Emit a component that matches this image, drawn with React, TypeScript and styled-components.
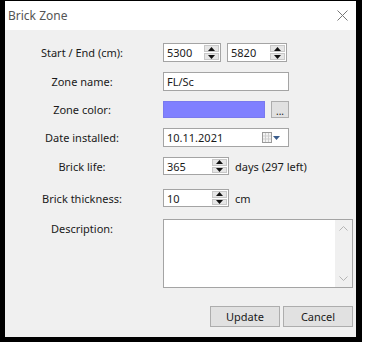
import styled, { createGlobalStyle } from 'styled-components';

const GlobalStyle = createGlobalStyle`
    html, body {
        margin: 0;
        padding: 0;
        background: #fff;
    }
    body {
        font-family: 'Noto Sans', 'Open Sans', sans-serif;
        font-size: 11px;
        color: #1a1a1a;
    }
`;

const Frame = styled.div`
    width: 351px;
    border-style: solid;
    border-color: #000;
    border-width: 1px 6px 5px 5px;
    background: #f0f0f0;
`;

const TitleBar = styled.div`
    height: 29px;
    background: #fff;
    display: flex;
    align-items: center;
    justify-content: space-between;
    padding: 0 8px 0 3px;
`;

const Title = styled.span`
    font-size: 12px;
    color: #555;
`;

const Body = styled.div`
    height: 307px;
    padding: 13px 3px 0 0;
    box-sizing: border-box;
    display: flex;
    flex-direction: column;
`;

const Row = styled.div<{ $top?: number; $align?: string }>`
    display: grid;
    grid-template-columns: 154px 1fr;
    column-gap: 4px;
    align-items: ${(p) => p.$align || 'center'};
    margin-top: ${(p) => p.$top || 0}px;
`;

const Label = styled.div<{ $pt?: number }>`
    text-align: center;
    padding-top: ${(p) => p.$pt || 0}px;
`;

const Field = styled.div`
    display: flex;
    align-items: center;
    gap: 6px;
`;

const TextBox = styled.div<{ $w: number; $h?: number }>`
    width: ${(p) => p.$w}px;
    height: ${(p) => p.$h || 19}px;
    box-sizing: border-box;
    border: 1px solid #a4a4a4;
    background: #fff;
    display: flex;
    align-items: center;
    padding-left: 3px;
    position: relative;
`;

const SpinWrap = styled.div<{ $w: number; $h?: number }>`
    width: ${(p) => p.$w}px;
    height: ${(p) => p.$h || 19}px;
    box-sizing: border-box;
    border: 1px solid #a4a4a4;
    background: #fff;
    display: flex;
    align-items: stretch;
`;

const SpinText = styled.div`
    flex: 1;
    display: flex;
    align-items: center;
    padding-left: 3px;
`;

const SpinButtons = styled.div`
    width: 15px;
    display: flex;
    flex-direction: column;
    margin: 1px 1px 1px 0;
    gap: 1px;
`;

const SpinBtn = styled.div`
    flex: 1;
    background: #e6e6e6;
    border: 1px solid #c8c8c8;
    display: flex;
    align-items: center;
    justify-content: center;
`;

const Swatch = styled.div`
    width: 102px;
    height: 17px;
    box-sizing: border-box;
    background: #8080ff;
    border: 1px solid #7a7aee;
`;

const SmallButton = styled.div`
    width: 18px;
    height: 17px;
    box-sizing: border-box;
    background: #e1e1e1;
    border: 1px solid #adadad;
    display: flex;
    align-items: flex-end;
    justify-content: center;
    font-size: 10px;
    line-height: 12px;
`;

const DateIcons = styled.div`
    position: absolute;
    right: 8px;
    top: 3px;
    display: flex;
    align-items: center;
    gap: 1px;
`;

const TextArea = styled.div`
    height: 69px;
    box-sizing: border-box;
    border: 1px solid #a4a4a4;
    background: #fff;
    display: flex;
    justify-content: flex-end;
`;

const ScrollBar = styled.div`
    width: 17px;
    background: #f0f0f0;
    display: flex;
    flex-direction: column;
    justify-content: space-between;
    align-items: center;
    padding: 6px 0;
`;

const Footer = styled.div`
    display: flex;
    justify-content: flex-end;
    gap: 3px;
    margin-top: 18px;
`;

const Button = styled.div`
    width: 70px;
    height: 21px;
    box-sizing: border-box;
    background: #e1e1e1;
    border: 1px solid #adadad;
    display: flex;
    align-items: center;
    justify-content: center;
`;

function Arrow({ up }: { up?: boolean }) {
    return (
        <svg width="7" height="4" viewBox="0 0 7 4">
            <path d={up ? 'M0 4 L3.5 0 L7 4 Z' : 'M0 0 L3.5 4 L7 0 Z'} fill="#111" />
        </svg>
    );
}

function Spin({ value, w, h }: { value: string; w: number; h?: number }) {
    return (
        <SpinWrap $w={w} $h={h}>
            <SpinText>{value}</SpinText>
            <SpinButtons>
                <SpinBtn>
                    <Arrow up />
                </SpinBtn>
                <SpinBtn>
                    <Arrow />
                </SpinBtn>
            </SpinButtons>
        </SpinWrap>
    );
}

function Chevron({ up }: { up?: boolean }) {
    return (
        <svg width="9" height="5" viewBox="0 0 9 5">
            <path d={up ? 'M0.5 4.5 L4.5 0.5 L8.5 4.5' : 'M0.5 0.5 L4.5 4.5 L8.5 0.5'} fill="none" stroke="#b5b5b5" />
        </svg>
    );
}

export default function App() {
    return (
        <>
            <GlobalStyle />
            <Frame>
                <TitleBar>
                    <Title>Brick Zone</Title>
                    <svg width="11" height="11" viewBox="0 0 11 11">
                        <path d="M0.5 0.5 L10.5 10.5 M10.5 0.5 L0.5 10.5" stroke="#777" strokeWidth="1" />
                    </svg>
                </TitleBar>
                <Body>
                    <Row>
                        <Label>Start / End (cm):</Label>
                        <Field>
                            <Spin value="5300" w={58} />
                            <Spin value="5820" w={60} />
                        </Field>
                    </Row>
                    <Row $top={10}>
                        <Label>Zone name:</Label>
                        <Field>
                            <TextBox $w={126}>FL/Sc</TextBox>
                        </Field>
                    </Row>
                    <Row $top={10}>
                        <Label>Zone color:</Label>
                        <Field>
                            <Swatch />
                            <SmallButton>...</SmallButton>
                        </Field>
                    </Row>
                    <Row $top={10}>
                        <Label>Date installed:</Label>
                        <Field>
                            <TextBox $w={126}>
                                10.11.2021
                                <DateIcons>
                                    <svg width="10" height="11" viewBox="0 0 10 11">
                                        <rect x="0.5" y="0.5" width="9" height="10" fill="#f4f4f4" stroke="#9a9a9a" />
                                        <path d="M3.5 1 V10 M6.5 1 V10 M1 4 H9 M1 7 H9" stroke="#cfcfcf" />
                                    </svg>
                                    <svg width="7" height="4" viewBox="0 0 7 4">
                                        <path d="M0 0 L3.5 4 L7 0 Z" fill="#3b5d8c" />
                                    </svg>
                                </DateIcons>
                            </TextBox>
                        </Field>
                    </Row>
                    <Row $top={10}>
                        <Label>Brick life:</Label>
                        <Field>
                            <Spin value="365" w={66} h={18} />
                            <span>days (297 left)</span>
                        </Field>
                    </Row>
                    <Row $top={14}>
                        <Label>Brick thickness:</Label>
                        <Field>
                            <Spin value="10" w={66} h={18} />
                            <span>cm</span>
                        </Field>
                    </Row>
                    <Row $top={12} $align="start">
                        <Label $pt={2}>Description:</Label>
                        <TextArea>
                            <ScrollBar>
                                <Chevron up />
                                <Chevron />
                            </ScrollBar>
                        </TextArea>
                    </Row>
                    <Footer>
                        <Button>Update</Button>
                        <Button>Cancel</Button>
                    </Footer>
                </Body>
            </Frame>
        </>
    );
}
